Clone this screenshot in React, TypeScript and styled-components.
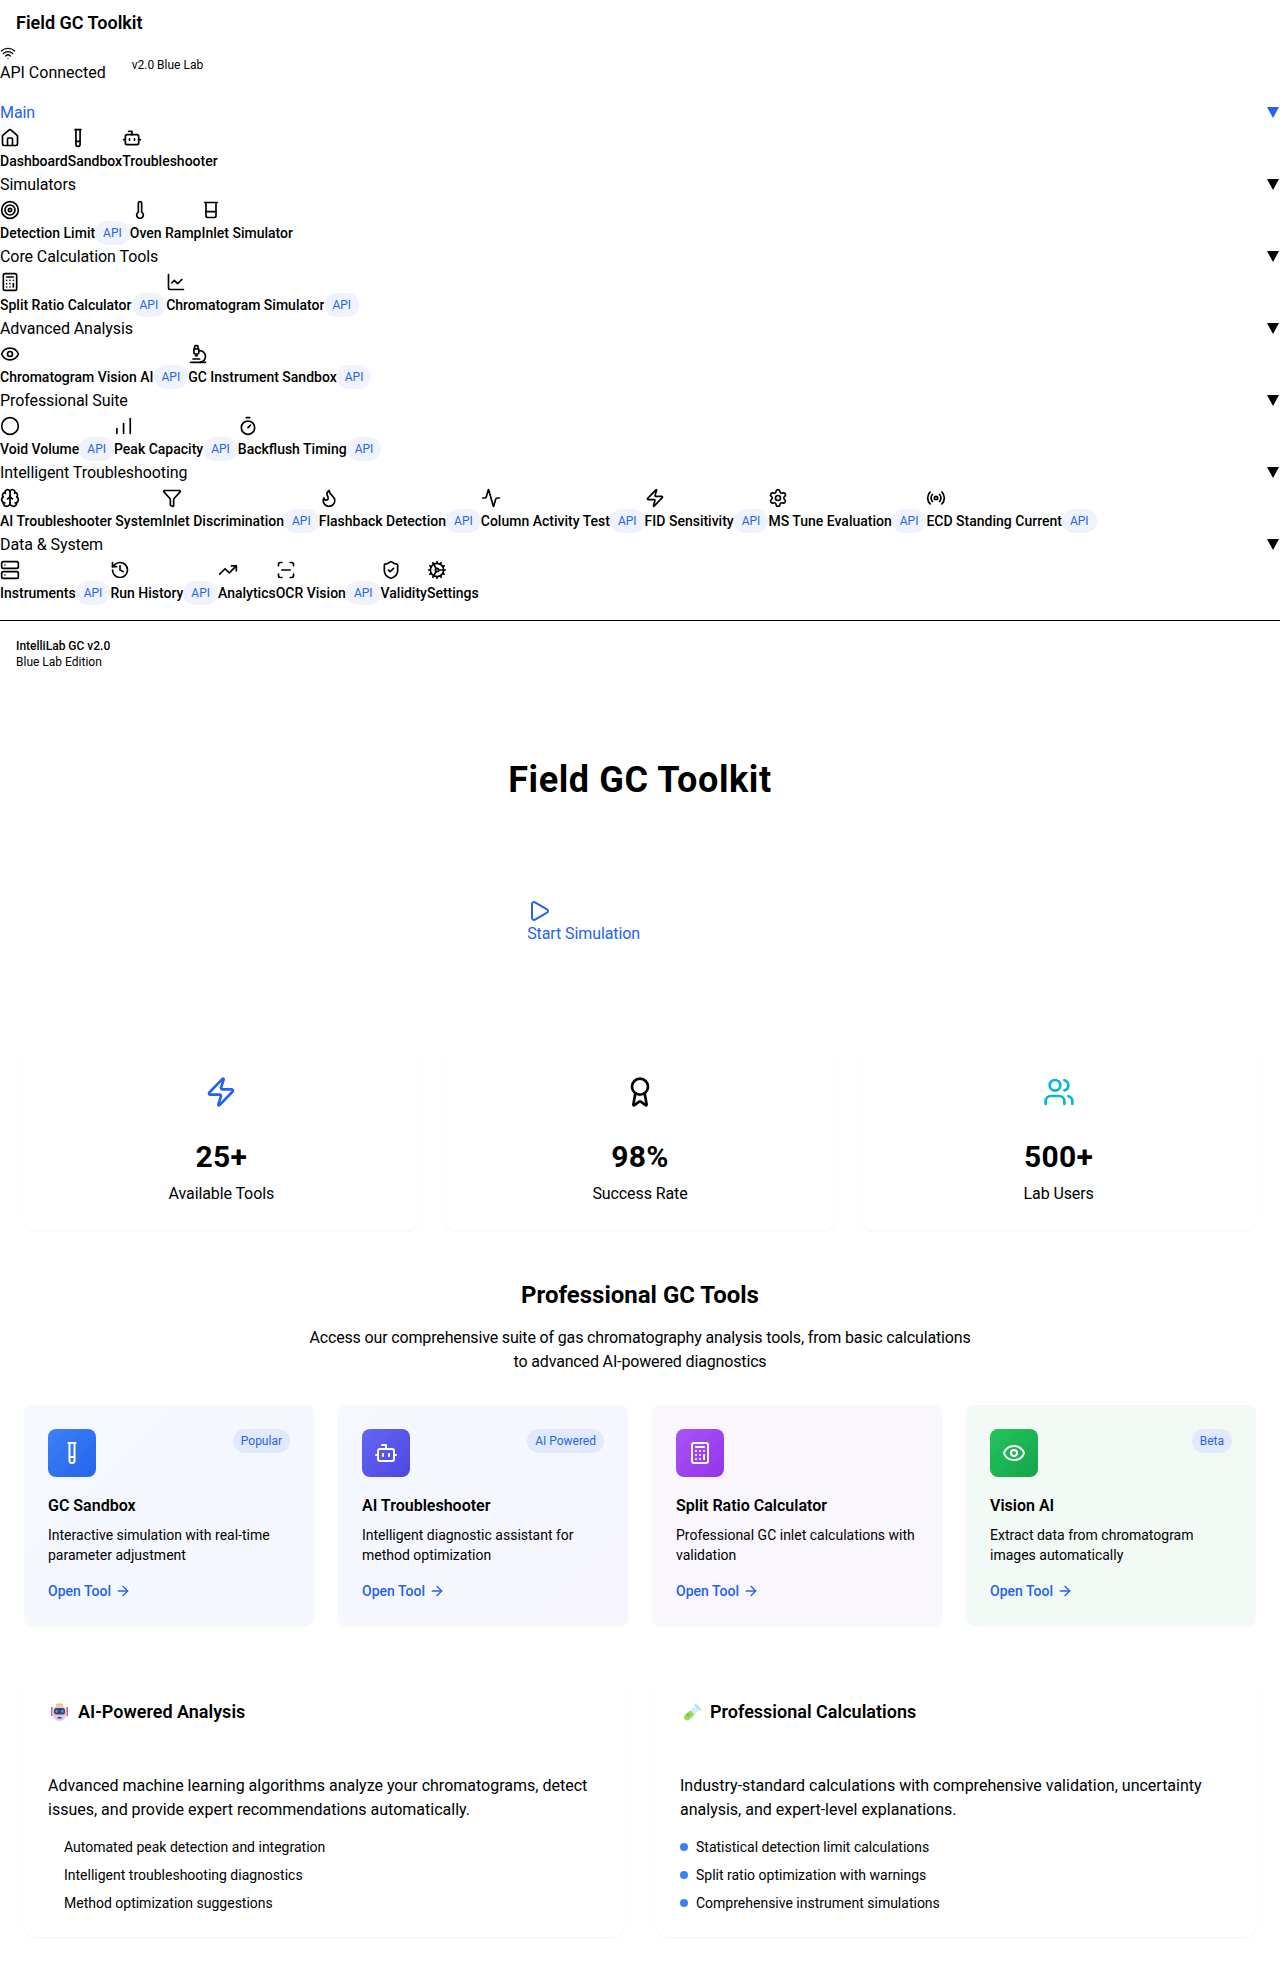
import type { ComponentType } from 'react';
import styled, { createGlobalStyle } from 'styled-components';
import {
  Activity,
  ArrowRight,
  Award,
  Beaker,
  Bot,
  Brain,
  Calculator,
  ChartLine,
  Circle,
  Cog,
  Eye,
  Filter,
  Flame,
  History,
  Home,
  Microscope,
  Play,
  Radio,
  ScanLine,
  Server,
  Settings,
  ShieldCheck,
  Target,
  TestTube,
  Thermometer,
  Timer,
  TrendingUp,
  Users,
  Wifi,
  Zap,
} from 'lucide-react';

const GlobalStyle = createGlobalStyle`
  * {
    box-sizing: border-box;
  }

  body {
    margin: 0;
    background: #fff;
    color: #000;
    font-family: Roboto, 'Noto Sans', sans-serif;
  }

  h1, h2, h3, p, ul {
    margin: 0;
    padding: 0;
  }
`;

type IconType = ComponentType<{ size?: number }>;

interface NavItem {
  label: string;
  icon: IconType;
  api?: boolean;
}

interface NavSection {
  title: string;
  active?: boolean;
  items: NavItem[];
}

const PeakBars = ({ size = 20 }: { size?: number }) => (
  <svg width={size} height={size} viewBox="0 0 24 24" fill="none" stroke="currentColor" strokeWidth="2" strokeLinecap="round">
    <path d="M3.5 21v-6M11.5 21V9M19.5 21V3" />
  </svg>
);

const sections: NavSection[] = [
  {
    title: 'Main',
    active: true,
    items: [
      { label: 'Dashboard', icon: Home },
      { label: 'Sandbox', icon: TestTube },
      { label: 'Troubleshooter', icon: Bot },
    ],
  },
  {
    title: 'Simulators',
    items: [
      { label: 'Detection Limit', icon: Target, api: true },
      { label: 'Oven Ramp', icon: Thermometer },
      { label: 'Inlet Simulator', icon: Beaker },
    ],
  },
  {
    title: 'Core Calculation Tools',
    items: [
      { label: 'Split Ratio Calculator', icon: Calculator, api: true },
      { label: 'Chromatogram Simulator', icon: ChartLine, api: true },
    ],
  },
  {
    title: 'Advanced Analysis',
    items: [
      { label: 'Chromatogram Vision AI', icon: Eye, api: true },
      { label: 'GC Instrument Sandbox', icon: Microscope, api: true },
    ],
  },
  {
    title: 'Professional Suite',
    items: [
      { label: 'Void Volume', icon: Circle, api: true },
      { label: 'Peak Capacity', icon: PeakBars, api: true },
      { label: 'Backflush Timing', icon: Timer, api: true },
    ],
  },
  {
    title: 'Intelligent Troubleshooting',
    items: [
      { label: 'AI Troubleshooter System', icon: Brain },
      { label: 'Inlet Discrimination', icon: Filter, api: true },
      { label: 'Flashback Detection', icon: Flame, api: true },
      { label: 'Column Activity Test', icon: Activity, api: true },
      { label: 'FID Sensitivity', icon: Zap, api: true },
      { label: 'MS Tune Evaluation', icon: Settings, api: true },
      { label: 'ECD Standing Current', icon: Radio, api: true },
    ],
  },
  {
    title: 'Data & System',
    items: [
      { label: 'Instruments', icon: Server, api: true },
      { label: 'Run History', icon: History, api: true },
      { label: 'Analytics', icon: TrendingUp },
      { label: 'OCR Vision', icon: ScanLine, api: true },
      { label: 'Validity', icon: ShieldCheck },
      { label: 'Settings', icon: Cog },
    ],
  },
];

const stats = [
  { value: '25+', label: 'Available Tools', icon: Zap, color: '#2563eb' },
  { value: '98%', label: 'Success Rate', icon: Award, color: '#000' },
  { value: '500+', label: 'Lab Users', icon: Users, color: '#06b6d4' },
];

const tools = [
  {
    title: 'GC Sandbox',
    text: 'Interactive simulation with real-time parameter adjustment',
    badge: 'Popular',
    icon: TestTube,
    tint: 'linear-gradient(135deg, #f5f8ff, #f5f7fe)',
    tile: 'linear-gradient(135deg, #3b82f6, #2563eb)',
  },
  {
    title: 'AI Troubleshooter',
    text: 'Intelligent diagnostic assistant for method optimization',
    badge: 'AI Powered',
    icon: Bot,
    tint: 'linear-gradient(135deg, #f5f8ff, #f6f5fe)',
    tile: 'linear-gradient(135deg, #6366f1, #4f46e5)',
  },
  {
    title: 'Split Ratio Calculator',
    text: 'Professional GC inlet calculations with validation',
    icon: Calculator,
    tint: 'linear-gradient(135deg, #f9f6fe, #f9f6fe)',
    tile: 'linear-gradient(135deg, #a855f7, #9333ea)',
  },
  {
    title: 'Vision AI',
    text: 'Extract data from chromatogram images automatically',
    badge: 'Beta',
    icon: Eye,
    tint: 'linear-gradient(135deg, #f2faf6, #f3faf6)',
    tile: 'linear-gradient(135deg, #22c55e, #16a34a)',
  },
];

const RobotEmoji = () => (
  <svg width="22" height="20" viewBox="0 0 22 20">
    <rect x="3" y="5" width="1.6" height="9" fill="#ec4f86" />
    <rect x="18.4" y="5" width="1.6" height="9" fill="#ec4f86" />
    <rect x="8" y="1.5" width="7" height="3" rx="1.2" fill="#f6c445" />
    <ellipse cx="11.5" cy="11" rx="7" ry="8" fill="#d8cbe8" />
    <rect x="6" y="6" width="11" height="6.5" rx="2.5" fill="#3a4266" />
    <rect x="7.6" y="7.8" width="2" height="3" rx="1" fill="#35b4ee" />
    <rect x="13.4" y="7.8" width="2" height="3" rx="1" fill="#35b4ee" />
    <rect x="9.5" y="15" width="4" height="1.4" rx="0.5" fill="#4c4266" />
  </svg>
);

const TubeEmoji = () => (
  <svg width="22" height="20" viewBox="0 0 22 20">
    <path d="M16.5 3 20 7 10 17c-1.4 1.6-3.6 1.9-5 .6-1.4-1.3-1.2-3.5.2-5z" fill="#d5eefa" />
    <path d="M10.5 8.5 14.5 12.5 10 17c-1.4 1.6-3.6 1.9-5 .6-1.4-1.3-1.2-3.5.2-5z" fill="#9ad958" />
    <path d="M15.5 1.5 21.5 7.5 20 8.5 14.5 3z" fill="#a9d9f2" />
    <circle cx="8" cy="13" r="1" fill="#5fa82f" />
  </svg>
);

const App = () => {
  return (
    <>
      <GlobalStyle />
      <Sidebar>
        <Brand>Field GC Toolkit</Brand>
        <StatusRow>
          <ApiStatus>
            <Wifi size={16} />
            <span>API Connected</span>
          </ApiStatus>
          <Version>v2.0 Blue Lab</Version>
        </StatusRow>

        <nav>
          {sections.map((section) => (
            <section key={section.title}>
              <SectionHead $active={section.active}>
                <span>{section.title}</span>
                <Caret $active={section.active} />
              </SectionHead>
              <NavRow>
                {section.items.map((item) => (
                  <NavLink key={item.label}>
                    <item.icon size={20} />
                    <NavLabel>
                      {item.label}
                      {item.api && <ApiPill>API</ApiPill>}
                    </NavLabel>
                  </NavLink>
                ))}
              </NavRow>
            </section>
          ))}
        </nav>

        <SidebarFooter>
          <strong>IntelliLab GC v2.0</strong>
          <span>Blue Lab Edition</span>
        </SidebarFooter>
      </Sidebar>

      <Main>
        <Hero>
          <h1>Field GC Toolkit</h1>
          <HeroActions>
            <StartButton>
              <Play size={24} />
              <span>Start Simulation</span>
            </StartButton>
          </HeroActions>
        </Hero>

        <StatGrid>
          {stats.map((stat) => (
            <StatCard key={stat.label}>
              <stat.icon size={32} color={stat.color} />
              <StatValue>{stat.value}</StatValue>
              <StatLabel>{stat.label}</StatLabel>
            </StatCard>
          ))}
        </StatGrid>

        <ToolsIntro>
          <h2>Professional GC Tools</h2>
          <p>
            Access our comprehensive suite of gas chromatography analysis tools, from basic
            calculations to advanced AI-powered diagnostics
          </p>
        </ToolsIntro>

        <ToolGrid>
          {tools.map((tool) => (
            <ToolCard key={tool.title} $tint={tool.tint}>
              <ToolTop>
                <ToolTile $tile={tool.tile}>
                  <tool.icon size={24} color="#fff" />
                </ToolTile>
                {tool.badge && <ToolBadge>{tool.badge}</ToolBadge>}
              </ToolTop>
              <h3>{tool.title}</h3>
              <p>{tool.text}</p>
              <OpenLink>
                Open Tool <ArrowRight size={16} />
              </OpenLink>
            </ToolCard>
          ))}
        </ToolGrid>

        <FeatureGrid>
          <FeatureCard>
            <FeatureTitle>
              <RobotEmoji />
              AI-Powered Analysis
            </FeatureTitle>
            <p>
              Advanced machine learning algorithms analyze your chromatograms, detect issues, and
              provide expert recommendations automatically.
            </p>
            <FeatureList>
              <FeatureItem>Automated peak detection and integration</FeatureItem>
              <FeatureItem>Intelligent troubleshooting diagnostics</FeatureItem>
              <FeatureItem>Method optimization suggestions</FeatureItem>
            </FeatureList>
          </FeatureCard>
          <FeatureCard>
            <FeatureTitle>
              <TubeEmoji />
              Professional Calculations
            </FeatureTitle>
            <p>
              Industry-standard calculations with comprehensive validation, uncertainty analysis,
              and expert-level explanations.
            </p>
            <FeatureList>
              <FeatureItem $dot>Statistical detection limit calculations</FeatureItem>
              <FeatureItem $dot>Split ratio optimization with warnings</FeatureItem>
              <FeatureItem $dot>Comprehensive instrument simulations</FeatureItem>
            </FeatureList>
          </FeatureCard>
        </FeatureGrid>
      </Main>
    </>
  );
};

const Sidebar = styled.aside`
  display: block;
`;

const Brand = styled.div`
  padding: 9px 16px 0;
  font-size: 18px;
  line-height: 28px;
  font-weight: 600;
`;

const StatusRow = styled.div`
  display: flex;
  align-items: center;
  gap: 26px;
  padding: 8px 0 16px;
`;

const ApiStatus = styled.div`
  font-size: 16px;
  line-height: 24px;

  svg {
    display: block;
  }
`;

const Version = styled.span`
  font-size: 12px;
  line-height: 16px;
`;

const SectionHead = styled.div<{ $active?: boolean }>`
  display: flex;
  align-items: center;
  justify-content: space-between;
  height: 24px;
  padding-bottom: 2px;
  font-size: 16px;
  letter-spacing: -0.08px;
  color: ${(p) => (p.$active ? '#2563eb' : '#000')};
`;

const Caret = styled.i<{ $active?: boolean }>`
  display: block;
  margin-right: 1px;
  border-left: 6.5px solid transparent;
  border-right: 6.5px solid transparent;
  border-top: 11px solid ${(p) => (p.$active ? '#2563eb' : '#000')};
`;

const NavRow = styled.div`
  display: flex;
`;

const NavLink = styled.a`
  display: block;

  svg {
    display: block;
    margin: 3px 0 1px;
  }
`;

const NavLabel = styled.div`
  display: flex;
  align-items: center;
  height: 24px;
  font-size: 14px;
  font-weight: 500;
  white-space: nowrap;
`;

const ApiPill = styled.span`
  height: 24px;
  padding: 0 8px;
  border-radius: 12px;
  background: #eff3fe;
  color: #2563eb;
  font-size: 12px;
  line-height: 24px;
  font-weight: 400;
`;

const SidebarFooter = styled.div`
  display: flex;
  flex-direction: column;
  margin-top: 15px;
  padding: 17px 16px 15px;
  border-top: 1px solid #000;
  font-size: 12px;
  line-height: 16px;

  strong {
    font-weight: 500;
  }
`;

const Main = styled.main`
  padding: 24px;
`;

const Hero = styled.header`
  padding-top: 51px;

  h1 {
    font-size: 36px;
    line-height: 40px;
    font-weight: 700;
    letter-spacing: 0.6px;
    text-align: center;
  }
`;

const HeroActions = styled.div`
  display: flex;
  justify-content: flex-end;
  width: 50%;
  margin-top: 99px;
`;

const StartButton = styled.button`
  display: block;
  padding: 0;
  border: none;
  background: none;
  color: #2563eb;
  font: 400 16px/24px Roboto, 'Noto Sans', sans-serif;
  letter-spacing: -0.1px;
  text-align: left;

  svg {
    display: block;
    margin-bottom: -1px;
  }
`;

const StatGrid = styled.div`
  display: grid;
  grid-template-columns: repeat(3, 1fr);
  gap: 24px;
  margin-top: 97px;
`;

const StatCard = styled.div`
  display: flex;
  flex-direction: column;
  align-items: center;
  padding: 33px 24px 24px;
  border-radius: 12px;
  box-shadow: 0 1px 2px rgb(0 0 0 / 0.05);
`;

const StatValue = styled.div`
  margin-top: 31px;
  font-size: 30px;
  line-height: 36px;
  font-weight: 700;
  letter-spacing: 0.3px;
`;

const StatLabel = styled.div`
  margin-top: 7px;
  font-size: 16px;
  line-height: 24px;
  letter-spacing: -0.1px;
`;

const ToolsIntro = styled.div`
  margin-top: 49px;
  text-align: center;

  h2 {
    font-size: 24px;
    line-height: 32px;
    font-weight: 700;
  }

  p {
    max-width: 672px;
    margin: 15px auto 0;
    font-size: 16px;
    line-height: 24px;
    letter-spacing: -0.15px;
  }
`;

const ToolGrid = styled.div`
  display: grid;
  grid-template-columns: repeat(4, 1fr);
  gap: 24px;
  margin-top: 31px;
`;

const ToolCard = styled.article<{ $tint: string }>`
  padding: 24px;
  border-radius: 8px;
  background: ${(p) => p.$tint};
  box-shadow: 0 1px 2px rgb(0 0 0 / 0.05);

  h3 {
    margin-top: 17px;
    font-size: 16px;
    line-height: 24px;
    font-weight: 600;
  }

  p {
    margin-top: 7px;
    font-size: 14px;
    line-height: 20px;
  }
`;

const ToolTop = styled.div`
  display: flex;
  align-items: flex-start;
  justify-content: space-between;
`;

const ToolTile = styled.div<{ $tile: string }>`
  display: flex;
  align-items: center;
  justify-content: center;
  width: 48px;
  height: 48px;
  border-radius: 8px;
  background: ${(p) => p.$tile};
`;

const ToolBadge = styled.span`
  height: 24px;
  padding: 0 8px;
  border-radius: 12px;
  background: #e1eafd;
  color: #2563eb;
  font-size: 12px;
  line-height: 25px;
`;

const OpenLink = styled.a`
  display: flex;
  align-items: center;
  gap: 4px;
  margin-top: 16px;
  color: #2563eb;
  font-size: 14px;
  line-height: 20px;
  font-weight: 500;
`;

const FeatureGrid = styled.div`
  display: grid;
  grid-template-columns: repeat(2, 1fr);
  gap: 32px;
  margin-top: 48px;
`;

const FeatureCard = styled.article`
  padding: 25px 24px 24px;
  border-radius: 12px;
  box-shadow: 0 1px 2px rgb(0 0 0 / 0.05);

  p {
    margin-top: 48px;
    font-size: 16px;
    line-height: 24px;
  }
`;

const FeatureTitle = styled.h3`
  display: flex;
  align-items: center;
  gap: 8px;
  font-size: 18px;
  line-height: 28px;
  font-weight: 600;
`;

const FeatureList = styled.ul`
  display: flex;
  flex-direction: column;
  gap: 8px;
  margin-top: 15px;
  list-style: none;
`;

const FeatureItem = styled.li<{ $dot?: boolean }>`
  display: flex;
  align-items: center;
  font-size: 14px;
  line-height: 20px;

  &::before {
    content: '';
    width: 8px;
    height: 8px;
    margin-right: 8px;
    border-radius: 50%;
    background: ${(p) => (p.$dot ? '#3b82f6' : 'transparent')};
  }
`;

export default App;
